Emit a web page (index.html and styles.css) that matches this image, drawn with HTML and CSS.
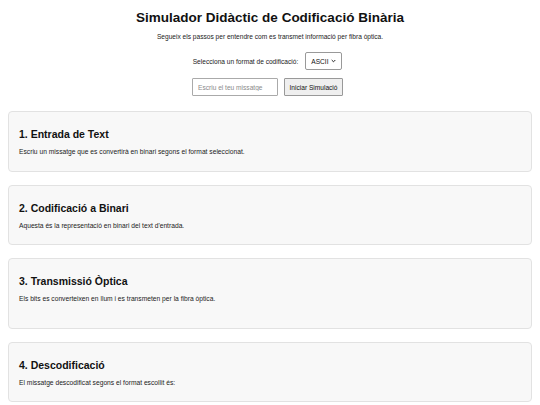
FILE: index.html
```html
<!DOCTYPE html>
<html lang="ca">
<head>
    <meta charset="UTF-8">
    <meta name="viewport" content="width=device-width, initial-scale=1.0">
    <title>Simulador Didàctic de Codificació Binària</title>
    <link rel="stylesheet" href="styles.css">
</head>
<body>
    <h1>Simulador Didàctic de Codificació Binària</h1>
    <p class="intro">Segueix els passos per entendre com es transmet informació per fibra òptica.</p>

    <div class="controls">
        <label for="format">Selecciona un format de codificació:</label>
        <span class="selectWrap">
            <select id="format">
                <option>ASCII</option>
                <option>UTF-8</option>
            </select>
            <svg class="chevron" width="5" height="4" viewBox="0 0 5 4">
                <path d="M0.7 1 L2.5 2.8 L4.3 1" fill="none" stroke="#222" stroke-width="1"/>
            </svg>
        </span>
    </div>

    <div class="controls">
        <input type="text" id="message" placeholder="Escriu el teu missatge">
        <button id="start">Iniciar Simulació</button>
    </div>

    <div class="step">
        <h2>1. Entrada de Text</h2>
        <p>Escriu un missatge que es convertirà en binari segons el format seleccionat.</p>
    </div>

    <div class="step">
        <h2>2. Codificació a Binari</h2>
        <p>Aquesta és la representació en binari del text d'entrada.</p>
    </div>

    <div class="step">
        <h2>3. Transmissió Òptica</h2>
        <p>Els bits es converteixen en llum i es transmeten per la fibra òptica.</p>
        <div class="fiber"></div>
    </div>

    <div class="step">
        <h2>4. Descodificació</h2>
        <p>El missatge descodificat segons el format escollit és:</p>
    </div>
</body>
</html>
```

FILE: styles.css
```css
* {
    box-sizing: border-box;
}
body {
    margin: 8px;
    font-family: "Liberation Sans", Arial, sans-serif;
    color: #111;
    background: #fff;
}
h1 {
    font-size: 13.5px;
    line-height: 18px;
    text-align: center;
    margin: 1px 0 0;
}
.intro {
    font-size: 6.6px;
    line-height: 9px;
    text-align: center;
    margin: 5px 0 11px;
    color: #222;
}
.controls {
    display: flex;
    justify-content: center;
    align-items: center;
    gap: 7px;
    margin-bottom: 8px;
    padding-right: 5px;
}
.controls label {
    font-size: 6.6px;
    color: #222;
}
.selectWrap {
    position: relative;
    display: block;
}
.selectWrap select {
    display: block;
    appearance: none;
    -webkit-appearance: none;
    font-family: inherit;
    font-size: 6.6px;
    height: 18px;
    width: 37px;
    padding: 0 0 0 5px;
    border: 1px solid #999;
    border-radius: 2px;
    background: #fff;
    color: #111;
}
.chevron {
    position: absolute;
    right: 6px;
    top: 7px;
    pointer-events: none;
}
.controls input {
    font-family: inherit;
    font-size: 6.6px;
    width: 86px;
    height: 18px;
    padding: 0 5px;
    border: 1px solid #aaa;
    border-radius: 1px;
}
.controls input::placeholder {
    color: #8a8a8a;
}
.controls button {
    font-family: inherit;
    font-size: 6.6px;
    width: 59px;
    height: 18px;
    padding: 0;
    margin-left: -1px;
    color: #111;
    background: #efefef;
    border: 1px solid #999;
    border-radius: 1px;
}
.step {
    background: #f8f8f8;
    border: 1px solid #e2e2e2;
    border-radius: 4px;
    padding: 16px 10px 14.5px;
    margin-top: 15px;
}
.step + .step {
    margin-top: 13px;
}
.step h2 {
    font-size: 10.5px;
    line-height: 13px;
    margin: 0 0 6px;
}
.step p {
    font-size: 6.7px;
    line-height: 9px;
    margin: 0;
    color: #222;
}
.fiber {
    height: 10px;
}
```
